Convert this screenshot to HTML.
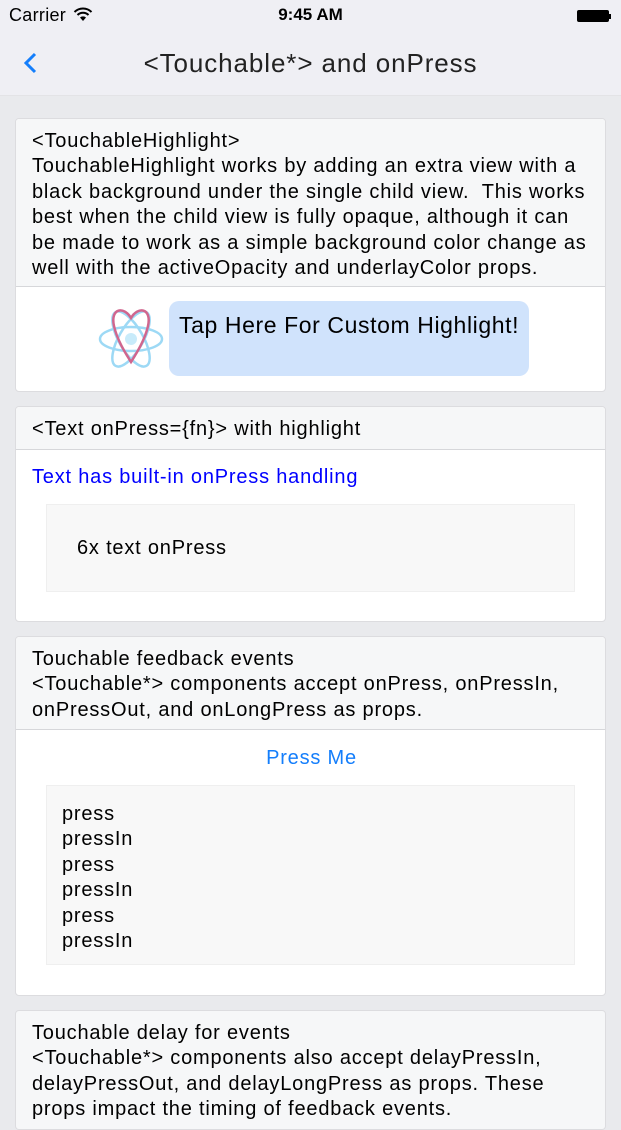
<!DOCTYPE html>
<html><head><meta charset="utf-8"><style>
*{margin:0;padding:0;box-sizing:border-box}
body{width:621px;height:1104px;overflow:hidden;background:#e9eaed;font-family:"Liberation Sans",sans-serif;color:#000;position:relative}
.abs{position:absolute}
.card{position:absolute;left:15px;width:591px;background:#fff;border:1px solid #dcdcdf;border-radius:4px;overflow:hidden}
.hd{background:#f6f7f8;border-bottom:1px solid #d6d7da;padding:10px 16px 0 16px}
.t{font-size:20px;line-height:25.4px;white-space:nowrap;letter-spacing:0.8px}
.gray{position:absolute;left:30px;width:529px;background:#f8f8f8;border:1px solid #efefef}
</style></head><body>
<div class="abs" style="left:0;top:0;width:621px;height:96px;background:#efeff4;border-bottom:1px solid #e3e3e6"></div>
<div class="abs" style="left:9px;top:5px;font-size:18px;letter-spacing:0.3px">Carrier</div>
<svg class="abs" style="left:73px;top:7px" width="20" height="15" viewBox="0 0 20 15"><path d="M10 14 L7 10.5 A4.5 4.5 0 0 1 13 10.5Z" fill="#000"/><path d="M4.5 8 A8 8 0 0 1 15.5 8" stroke="#000" stroke-width="2" fill="none"/><path d="M1.5 5 A12 12 0 0 1 18.5 5" stroke="#000" stroke-width="2" fill="none"/></svg>
<div class="abs" style="left:0;width:621px;top:5px;text-align:center;font-size:17px;font-weight:bold">9:45 AM</div>
<div class="abs" style="left:577px;top:10px;width:32px;height:12px;background:#000;border-radius:2px"></div>
<div class="abs" style="left:609px;top:14px;width:2px;height:5px;background:#000"></div>
<svg class="abs" style="left:22px;top:52px" width="16" height="22"><path d="M13 2 L4 11 L13 20" stroke="#147efb" stroke-width="3" fill="none"/></svg>
<div class="abs" style="left:0;width:621px;top:48px;text-align:center;font-size:26px;letter-spacing:0.9px;color:#222">&lt;Touchable*&gt; and onPress</div>

<div class="card" style="top:118px;height:274px">
<div class="hd" style="height:168px"><div class="t">&lt;TouchableHighlight&gt;<br>TouchableHighlight works by adding an extra view with a<br>black background under the single child view.&nbsp; This works<br>best when the child view is fully opaque, although it can<br>be made to work as a simple background color change as<br>well with the activeOpacity and underlayColor props.</div></div>
<svg class="abs" style="left:82px;top:187px" width="66" height="70" viewBox="0 0 66 70"><g fill="none" stroke="#9dd9f5" stroke-width="2.5"><ellipse cx="33" cy="33" rx="31" ry="12"/><ellipse cx="33" cy="33" rx="31" ry="12" transform="rotate(60 33 33)"/><ellipse cx="33" cy="33" rx="31" ry="12" transform="rotate(-60 33 33)"/></g><circle cx="33" cy="33" r="6" fill="#c8ebfa"/><path d="M33 12 C26 0 12 2 16 20 C19 34 28 48 33 56 C38 48 47 34 50 20 C54 2 40 0 33 12Z" fill="none" stroke="#d0668e" stroke-width="2.5"/></svg>
<div class="abs" style="left:153px;top:182px;width:360px;height:75px;background:#d0e3fc;border-radius:10px;padding:11px 0 0 10px;font-size:23px;letter-spacing:0.6px;white-space:nowrap">Tap Here For Custom Highlight!</div>
</div>

<div class="card" style="top:406px;height:216px">
<div class="hd" style="height:43px"><div class="t">&lt;Text onPress={fn}&gt; with highlight</div></div>
<div class="abs t" style="left:16px;top:58px;color:#0000ff">Text has built-in onPress handling</div>
<div class="gray" style="top:97px;height:88px"><div class="t abs" style="left:30px;top:31px">6x text onPress</div></div>
</div>

<div class="card" style="top:636px;height:360px">
<div class="hd" style="height:93px"><div class="t">Touchable feedback events<br>&lt;Touchable*&gt; components accept onPress, onPressIn,<br>onPressOut, and onLongPress as props.</div></div>
<div class="abs t" style="left:0;width:591px;text-align:center;top:109px;color:#147efb">Press Me</div>
<div class="gray" style="top:148px;height:180px"><div class="t abs" style="left:15px;top:16px">press<br>pressIn<br>press<br>pressIn<br>press<br>pressIn</div></div>
</div>

<div class="card" style="top:1010px;height:120px">
<div class="hd" style="height:120px"><div class="t">Touchable delay for events<br>&lt;Touchable*&gt; components also accept delayPressIn,<br>delayPressOut, and delayLongPress as props. These<br>props impact the timing of feedback events.</div></div>
</div>
</body></html>
